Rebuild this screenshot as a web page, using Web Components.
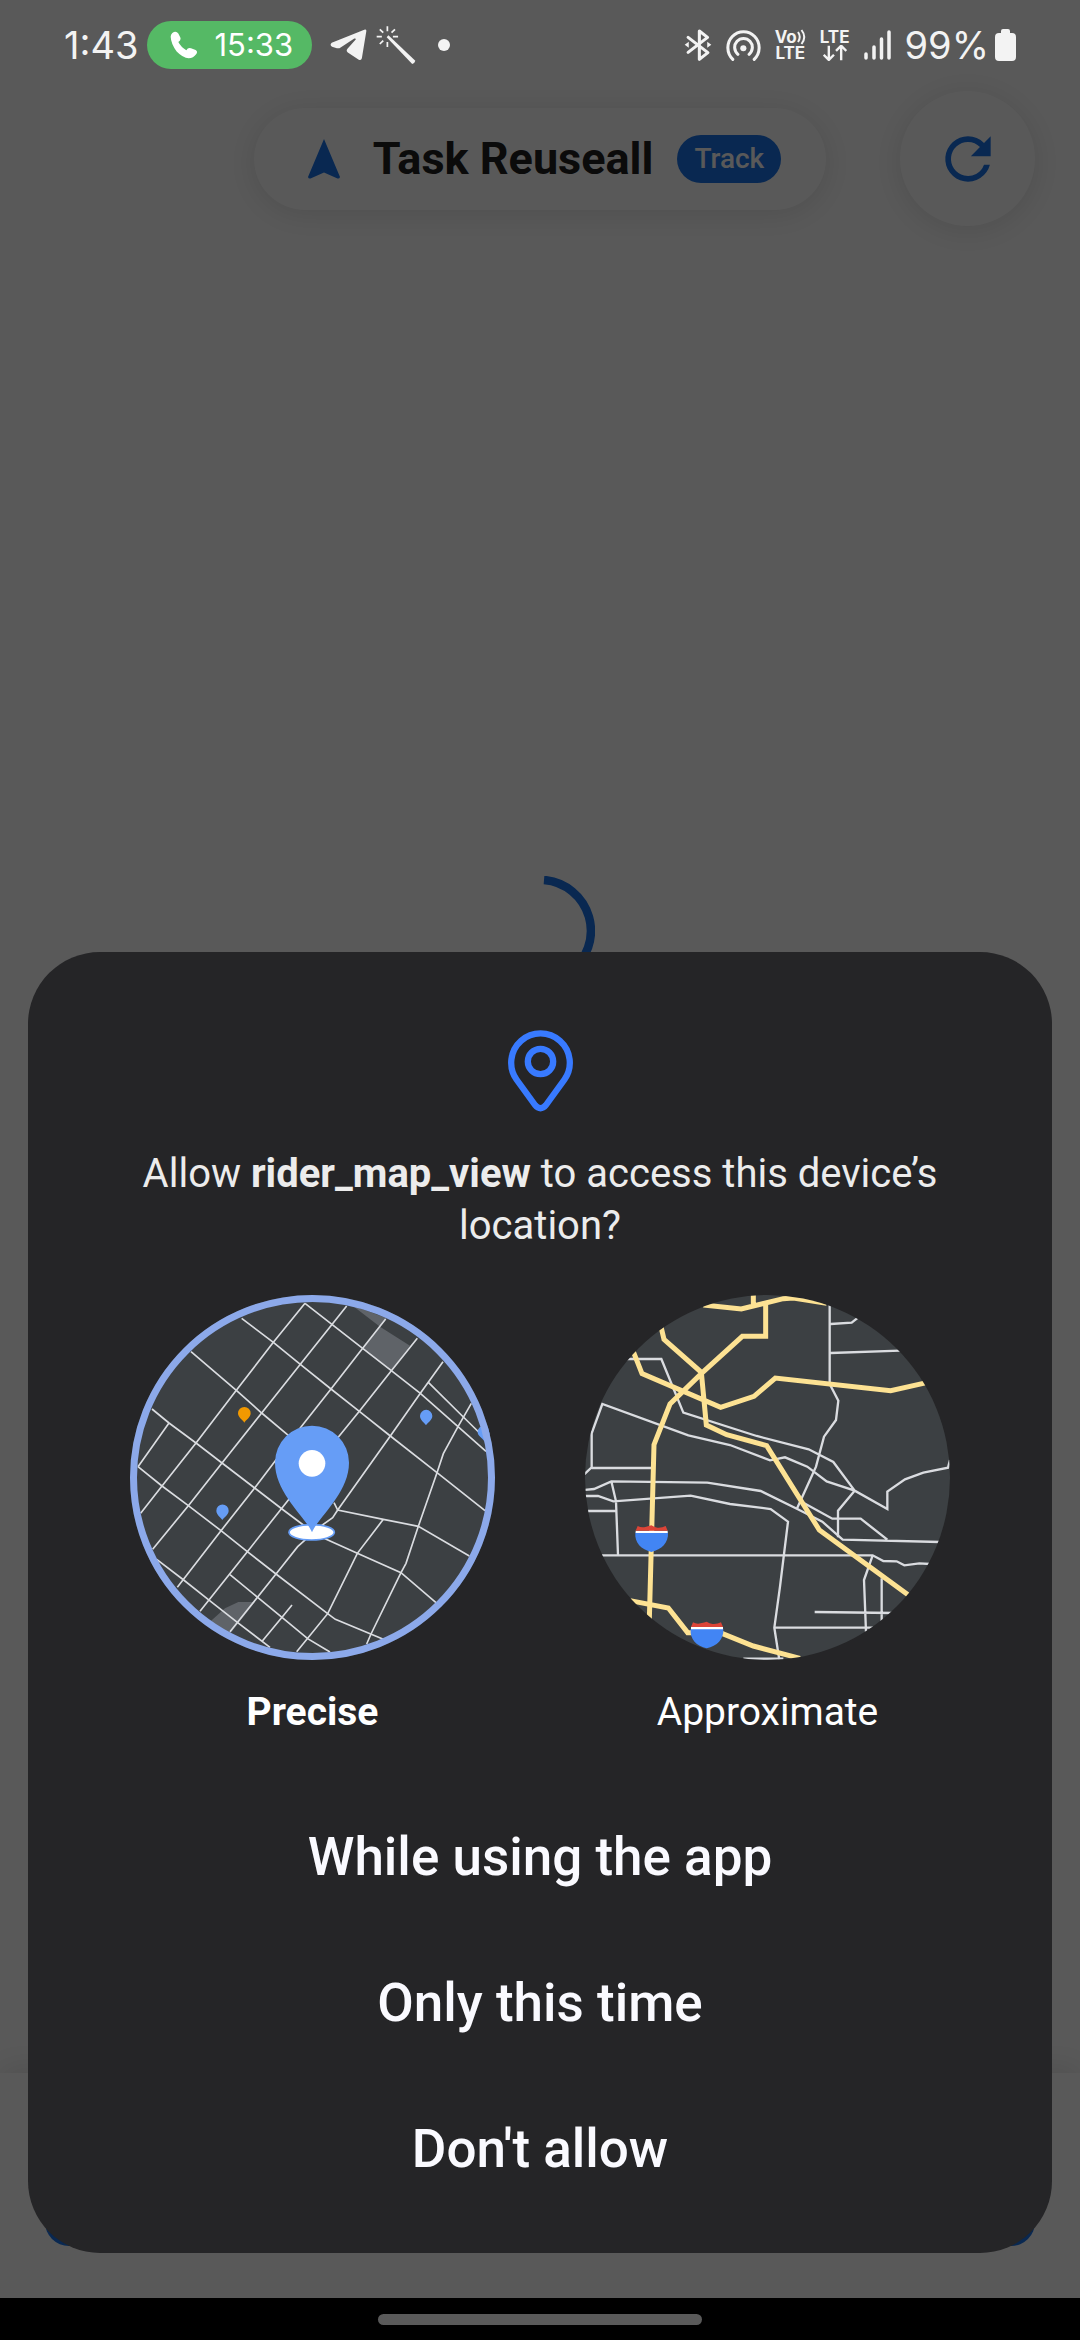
<!DOCTYPE html>
<html lang="en">
<head>
<meta charset="utf-8">
<meta name="viewport" content="width=device-width, initial-scale=1">
<title>Location permission</title>
<style>
  html, body { margin: 0; background: #000; }
  body { font-family: Roboto, "Noto Sans", sans-serif; }
</style>
</head>
<body>
<phone-screen>
  <rider-app slot="app">
    <task-pill slot="title" status="Track">Task Reuseall</task-pill>
  </rider-app>
  <permission-sheet slot="dialog">
    <span slot="title">Allow <b>rider_map_view</b> to access this device’s location?</span>
    <accuracy-option slot="options" value="precise" checked>
      <precise-map></precise-map><span slot="label">Precise</span>
    </accuracy-option>
    <accuracy-option slot="options" value="approximate">
      <approximate-map></approximate-map><span slot="label">Approximate</span>
    </accuracy-option>
    <sheet-action slot="actions">While using the app</sheet-action>
    <sheet-action slot="actions">Only this time</sheet-action>
    <sheet-action slot="actions">Don't allow</sheet-action>
  </permission-sheet>
  <status-bar slot="status" time="1:43" call="15:33" battery="99%"></status-bar>
</phone-screen>

<script>
const define = (name, markup) => customElements.define(name, class extends HTMLElement {
  connectedCallback() {
    if (this.shadowRoot) return;
    const html = typeof markup === 'function' ? markup(this) : markup;
    this.attachShadow({ mode: 'open' }).innerHTML = html;
  }
});

/* Stacks app, dialog and status bar above the gesture bar. */
define('phone-screen', `
<style>
  :host { display: grid; grid-template-rows: 1fr auto; grid-template-columns: 100%; min-height: 100vh; background: #000; }
  slot { display: grid; grid-area: 1 / 1; }
  slot[name=status] { align-self: start; }
  nav { grid-area: 2 / 1; display: flex; align-items: center; justify-content: center; height: 42px; background: #000; }
  nav span { width: 30%; height: 11px; border-radius: 6px; background: #5a5a5a; }
</style>
<slot name="app"></slot><slot name="dialog"></slot><slot name="status"></slot>
<nav><span></span></nav>`);

define('rider-app', `
<style>
  :host { display: flex; flex-direction: column; background: #fff; --blue: #1a73e8; overflow: hidden; }
  header { display: grid; grid-template-columns: 1fr auto 1fr; align-items: center; padding: 91px 45px 0; }
  ::slotted(task-pill) { grid-column: 2; }
  button { justify-self: end; display: grid; place-items: center; width: 135px; height: 135px; padding: 0; border: 0; border-radius: 50%; background: #fff; box-shadow: 0 4px 30px rgba(0,0,0,.12); }
  main { flex: 1; display: flex; justify-content: center; align-items: flex-start; padding-top: 650px; }
  footer { padding: 38px 45px 52px; background: #fff; box-shadow: 0 -4px 30px rgba(0,0,0,.12); }
  .bar { height: 135px; border-radius: 24px; background: var(--blue); }
</style>
<header><slot name="title"></slot>
  <button aria-label="Refresh"><svg width="68" height="68" viewBox="0 0 24 24" fill="#1a73e8"><path d="M17.65 6.35A7.96 7.96 0 0 0 12 4a8 8 0 1 0 7.73 10h-2.08A6 6 0 1 1 12 6c1.66 0 3.14.69 4.22 1.78L13 11h7V4z"/></svg></button>
</header>
<main><svg width="110" height="110" viewBox="-55 -55 110 110" fill="none" stroke="#1a73e8" stroke-width="8.5"><path d="M4-51A51 51 0 0 1 30 41"/></svg></main>
<footer><div class="bar"></div></footer>`);

define('task-pill', el => `
<style>
  :host { display: flex; align-items: center; gap: 24px; height: 102px; box-sizing: border-box; padding: 0 45px; border-radius: 51px; background: #fff; box-shadow: 0 4px 30px rgba(0,0,0,.12); white-space: nowrap; }
  h1 { margin: 0; font-size: 45px; line-height: 54px; font-weight: 700; color: #212121; }
  .tag { padding: 0 17px; border-radius: 24px; background: #1a73e8; color: #fff; font-size: 28px; line-height: 48px; font-weight: 500; }
</style>
<svg width="50" height="50" viewBox="0 0 50 50" fill="#1a73e8"><path d="M25 5 41 43q-.500 2-2.500 1.500L25 38.500 11.500 44.500Q9.500 45 9 43z"/></svg>
<h1><slot></slot></h1><span class="tag">${el.getAttribute('status')}</span>`);

define('status-bar', el => `
<style>
  :host { display: flex; justify-content: space-between; align-items: center; height: 90px; padding: 0 64px; color: #f3f3f3; font-family: Inter, Roboto, sans-serif; }
  .side { display: flex; align-items: center; gap: 14px; }
  .big { font-size: 38px; line-height: 48px; }
  .call { display: flex; align-items: center; gap: 16px; height: 48px; box-sizing: border-box; padding: 0 19px 0 23px; border-radius: 24px; background: #55b965; color: #fff; font-size: 31px; line-height: 48px; }
  .start { gap: 9px; }
  .icons { display: flex; align-items: center; gap: 9px; padding-left: 9px; }
  .net { display: grid; justify-items: center; font-weight: 700; font-size: 17px; line-height: 16px; }
  .net div { display: flex; align-items: center; }
  .dot { width: 12px; height: 12px; margin-left: 13px; border-radius: 50%; background: #f3f3f3; }
  .end { display: flex; align-items: center; gap: 6px; }
</style>
<div class="side start">
  <span class="big">${el.getAttribute('time')}</span>
  <span class="call"><svg width="28" height="28" viewBox="496 90 84 86" preserveAspectRatio="none" fill="#fff"><path d="M503 96Q514 87 521 98L527 110Q530 118 521 124 529 140 545 149 550 140 559 143L573 148Q580 152 575 161 566 174 552 174 535 173 516 153 499 130 498 108 498 100 503 96Z"/></svg>${el.getAttribute('call')}</span>
  <span class="icons">
    <svg width="37" height="32" viewBox="958 92 108 97" preserveAspectRatio="none" fill="#f3f3f3"><path d="M963 134 1058 94Q1065 92 1064 99L1051 181Q1049 189 1042 185L1010 163Q1004 158 1009 152L1033 124Q1034 119 1029 121L989 148Q984 152 978 150L964 146Q956 140 963 134Z"/></svg>
    <svg width="40" height="39" viewBox="1090 78 116 117" preserveAspectRatio="none" fill="none" stroke="#f3f3f3" stroke-width="5"><path d="M1123 79v15M1123 126v15M1092 110h15M1139 110h15M1101 88l10 10M1145 88l-10 10M1101 132l10-10"/><path stroke="none" fill="#f3f3f3" d="M1121 112 1126 106 1204 182Q1202 190 1195 192Z"/></svg>
    <span class="dot"></span>
  </span>
</div>
<div class="side">
  <svg width="28" height="34" viewBox="412 84 82 102" preserveAspectRatio="none" fill="none" stroke="#f3f3f3" stroke-width="9" stroke-linejoin="round" stroke-linecap="round"><path d="M424 112 482 158 457 178V93L481 112 424 157"/><path fill="#f3f3f3" stroke="none" d="M414 134l12-9v18zM492 134l-12-9v18z"/></svg>
  <svg width="35" height="31" viewBox="532 88 103 93" preserveAspectRatio="none" fill="none" stroke="#f3f3f3" stroke-width="9" stroke-linecap="round"><path d="M552 176A46 48 0 1 1 615 176M567 161A26 27 0 1 1 600 161"/><circle cx="583" cy="143" r="9" fill="#f3f3f3" stroke="none"/></svg>
  <span class="net"><div>Vo<svg width="9" height="16" viewBox="0 0 9 16" fill="none" stroke="#f3f3f3" stroke-width="2"><path d="M1 3q3.500 5 0 10M4.500 1q5.500 7 0 14"/></svg></div><div>LTE</div></span>
  <span class="net"><div>LTE</div><svg width="24" height="16" viewBox="817 140 70 46" preserveAspectRatio="none" fill="none" stroke="#f3f3f3" stroke-width="7"><path d="M834 142v40M819 168l15 15 15-15M870 184v-40M855 157l15-15 15 15"/></svg></span>
  <svg width="27" height="30" viewBox="0 0 27 30" stroke="#f3f3f3" stroke-width="3.500" stroke-linecap="round"><path d="M2 24v4M10 17v11M17.500 9v19M25 2v26"/></svg>
  <span class="end"><span class="big">${el.getAttribute('battery')}</span>
  <svg width="21" height="32" viewBox="0 0 21 32" fill="#f3f3f3"><path d="M6 2q0-2 2-2h5q2 0 2 2v2h2q4 0 4 4v20q0 4-4 4H4q-4 0-4-4V8q0-4 4-4h2z"/></svg></span>
</div>`);

define('permission-sheet', `
<style>
  :host { display: flex; flex-direction: column; justify-content: flex-end; padding: 0 28px 45px; background: rgba(0,0,0,.65); color: #fff; }
  section { display: flex; flex-direction: column; align-items: center; padding: 77px 0 32px; border-radius: 72px; background: #252527; }
  h2 { margin: 36px 102px 43px; font-size: 40px; line-height: 52px; font-weight: 400; color: #ececec; text-align: center; }
  .options { display: flex; justify-content: center; gap: 90px; margin-bottom: 45px; }
  .actions { display: flex; flex-direction: column; align-self: stretch; }
</style>
<section role="dialog">
  <svg width="65" height="83" viewBox="0 0 65 83" fill="none" stroke="#387aff" stroke-width="6.300"><path d="M8.500 50.500A29.300 29.300 0 1 1 56.500 50.500L38 76Q32.500 82.500 27 76Z" stroke-linejoin="round"/><circle cx="32.500" cy="32.500" r="12.700"/></svg>
  <h2><slot name="title"></slot></h2>
  <div class="options"><slot name="options"></slot></div>
  <div class="actions"><slot name="actions"></slot></div>
</section>`);

define('accuracy-option', el => `
<style>
  :host { display: block; }
  label { display: flex; flex-direction: column; align-items: center; gap: 26px; font-size: 39px; line-height: 52px; }
  label:has(:checked) { font-weight: 700; }
  .face { display: grid; grid-template: 365px / 365px; }
  .face > * { grid-area: 1 / 1; }
  .face slot { display: block; }
  input { appearance: none; margin: 0; z-index: 1; border-radius: 50%; }
  input:checked { border: 7px solid #8ca9ea; }
</style>
<label><span class="face"><slot></slot><input type="radio" name="accuracy" value="${el.getAttribute('value')}" ${el.hasAttribute('checked') ? 'checked' : ''}></span><slot name="label"></slot></label>`);

define('sheet-action', `
<style>
  :host { display: grid; }
  button { height: 146px; padding: 2px 0 0; border: 0; background: none; color: #fafaff; font: 500 53px/60px Roboto, sans-serif; }
</style>
<button><slot></slot></button>`);

define('precise-map', `
<style>:host { display: block; } svg { display: block; width: 100%; height: 100%; border-radius: 50%; }</style>
<svg viewBox="30 45 1095 1095">
  <rect x="30" y="45" width="1095" height="1095" fill="#3c4043"/>
  <path fill="#5f6368" d="M695 75 800 115 780 140ZM780 140 870 197 814 272 728 205ZM270 1025 315 985 355 966H405L320 1075Z"/>
  <g fill="none" stroke="#dadce0" stroke-width="5">
    <path d="M555 70 460 187 349 331 228 489 126 618 62 700M680 78 541 253 425 399 306 549 205 677 98 808M797 117 728 205 633 327 540 445 404 624 303 752 172 922M892 175 814 272 718 394 640 490 505 660 382 815 240 994M969 245 901 340 811 468 653 690 638 713 600 740 533 800 468 882 330 1055M147 429 54 560M516 975 486 1012 427 1083"/>
    <path d="M1054 370 1014 440 970 521 951 578 895 739 858 850 843 878 753 1062 740 1092M790 718 712 820 623 1001 530 1115"/>
    <path d="M555 70 728 205 814 272 901 340 1014 440 1098 514M365 115 460 187 541 253 633 327 718 394 811 468 951 578 1095 692M213 215 349 331 425 399 505 466M96 387 147 429 228 489 306 549 404 624 486 687 550 735 617 777 712 820 843 878 948 968M54 560 126 618 205 677 303 752 382 815 468 882 623 1001 646 1018 790 1078M110 838 191 900 268 961 353 1028 450 1102M330 884 413 952 486 1012 563 1076 630 1116M642 668 653 690 790 718 895 739 1048 828M925 307 1030 411 1085 465"/>
  </g>
  <path fill="#f29900" d="M373 428C368 420 354 412 354 400A19 19 0 0 1 392 400C392 412 378 420 373 428Z"/>
  <path fill="#669df6" d="M918 436C913 428 900 420 900 408A18.500 18.500 0 0 1 937 408C937 420 923 428 918 436ZM307 720C302 712 289 704 289 692A18.500 18.500 0 0 1 326 692C326 704 312 712 307 720ZM1092 482C1087 474 1073 468 1073 456A19 19 0 0 1 1111 456C1111 468 1097 474 1092 482Z"/>
  <ellipse cx="575" cy="757" rx="68" ry="23" fill="#fff" stroke="#669df6" stroke-width="5"/>
  <path fill="#669df6" d="M576 757C560 715 465 640 465 548A111 111 0 0 1 687 548C687 640 592 715 576 757Z"/>
  <circle cx="576" cy="550" r="40" fill="#fff"/>
</svg>`);

define('approximate-map', `
<style>:host { display: block; } svg { display: block; width: 100%; height: 100%; border-radius: 50%; }</style>
<svg viewBox="45 45 1095 1095">
  <rect x="45" y="45" width="1095" height="1095" fill="#3c4043"/>
  <g fill="none" stroke="#dadce0" stroke-width="7">
    <path d="M779 70V312L805 362 798 420 762 470 738 560 680 688M782 132 845 128 865 112M782 219 990 212M170 237H274L340 398 560 468 716 508 790 546 854 632 804 692V772M35 590 65 562V460L97 372 355 466 480 495 600 541 645 532 712 560 770 604 854 632 952 687V635L1005 598 1060 578 1134 563 1140 540M65 564H245"/>
    <path d="M40 630 72 627 124 604 412 608 572 633 682 687 757 725 818 779 1110 786M40 648H84L130 664 362 647 480 672 602 687 654 725 630 920 613 1043 628 1140M45 693H138M124 604 138 664 144 825M90 826H908L940 843 980 844 1003 856 1048 850 1080 852M700 668 787 716H872L952 779M908 826 882 900 888 1055M935 895V1030M734 996 970 999M613 1043H910M520 1136H640"/>
  </g>
  <g fill="none" stroke="#fde293" stroke-width="15">
    <path d="M400 75 514 87 640 56 670 54 770 70M550 40V77M587 70V169H517L397 278 300 372 252 494 238 1020M273 140 282 178 394 277 409 435 470 464 590 497 748 750 1015 945M190 215 216 281 452 382 552 349 616 294 962 332 1070 308M180 962 295 984 353 1058H380M450 1058 550 1098 690 1135"/>
  </g>
  <path fill="#4285f4" d="M196 757H294C296 790 275 808 244 816 214 808 193 790 196 757ZM362 1046H460C462 1079 441 1097 410 1105 380 1097 359 1079 362 1046Z"/>
  <path fill="#fff" d="M197 752H293V759H197ZM363 1041H459V1048H363Z"/>
  <path fill="#db4437" d="M203 738Q214 744 226 741 238 738 244 736 252 742 262 743 276 744 287 738L293 752H197ZM369 1027Q380 1033 392 1030 404 1027 410 1025 418 1031 428 1032 442 1033 453 1027L459 1041H363Z"/>
</svg>`);
</script>
</body>
</html>
